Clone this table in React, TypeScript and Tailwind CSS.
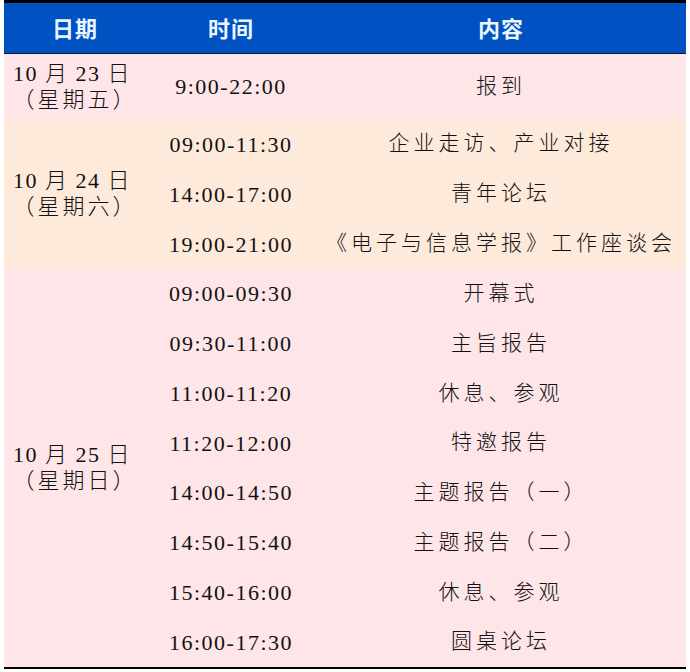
const groups = [
    {
        date: "10 月 23 日",
        week: "（星期五）",
        bg: "bg-[#fde5e8]",
        rowH: "h-[65px]",
        rows: [["9:00-22:00", "报到"]],
    },
    {
        date: "10 月 24 日",
        week: "（星期六）",
        bg: "bg-[#fdeadb]",
        rowH: "h-[50px]",
        rows: [
            ["09:00-11:30", "企业走访、产业对接"],
            ["14:00-17:00", "青年论坛"],
            ["19:00-21:00", "《电子与信息学报》工作座谈会"],
        ],
    },
    {
        date: "10 月 25 日",
        week: "（星期日）",
        bg: "bg-[#fde5e8]",
        rowH: "h-[49.75px]",
        rows: [
            ["09:00-09:30", "开幕式"],
            ["09:30-11:00", "主旨报告"],
            ["11:00-11:20", "休息、参观"],
            ["11:20-12:00", "特邀报告"],
            ["14:00-14:50", "主题报告（一）"],
            ["14:50-15:40", "主题报告（二）"],
            ["15:40-16:00", "休息、参观"],
            ["16:00-17:30", "圆桌论坛"],
        ],
    },
]

const serif = "font-['Liberation_Serif','Noto_Sans_CJK_SC',serif]"

export default function App() {
    return (
        <div className="w-[690px] h-[672px] bg-white">
            <div className="ml-[4px] w-[682px] border-t-[3px] border-b-2 border-black text-[#111]">
                <div className="grid grid-cols-[142px_170px_370px] h-[51px] pb-px bg-[#0051c1] border-b border-[#0a1a40] text-[#eaf6ff] text-[22px] font-bold font-['Noto_Sans_CJK_SC',sans-serif]">
                    <div className="flex items-center justify-center tracking-[1px]">日期</div>
                    <div className="flex items-center justify-center tracking-[1px]">时间</div>
                    <div className="flex items-center justify-center tracking-[1px]">内容</div>
                </div>
                {groups.map((g) => (
                    <div key={g.date} className={`flex ${g.bg} ${serif}`}>
                        <div className="w-[142px] flex flex-col items-center justify-center text-[22px] leading-[26px] font-light">
                            <div className="tracking-[1.5px] pr-[6px]">{g.date}</div>
                            <div className="tracking-[3px]">{g.week}</div>
                        </div>
                        <div className="flex-1 flex flex-col">
                            {g.rows.map(([time, text]) => (
                                <div key={time + text} className={`flex items-center ${g.rowH}`}>
                                    <div className="w-[170px] text-center text-[22px] tracking-[1.5px]">
                                        {time}
                                    </div>
                                    <div className="flex-1 text-center text-[21px] tracking-[4px] font-light">
                                        {text}
                                    </div>
                                </div>
                            ))}
                        </div>
                    </div>
                ))}
            </div>
        </div>
    )
}
